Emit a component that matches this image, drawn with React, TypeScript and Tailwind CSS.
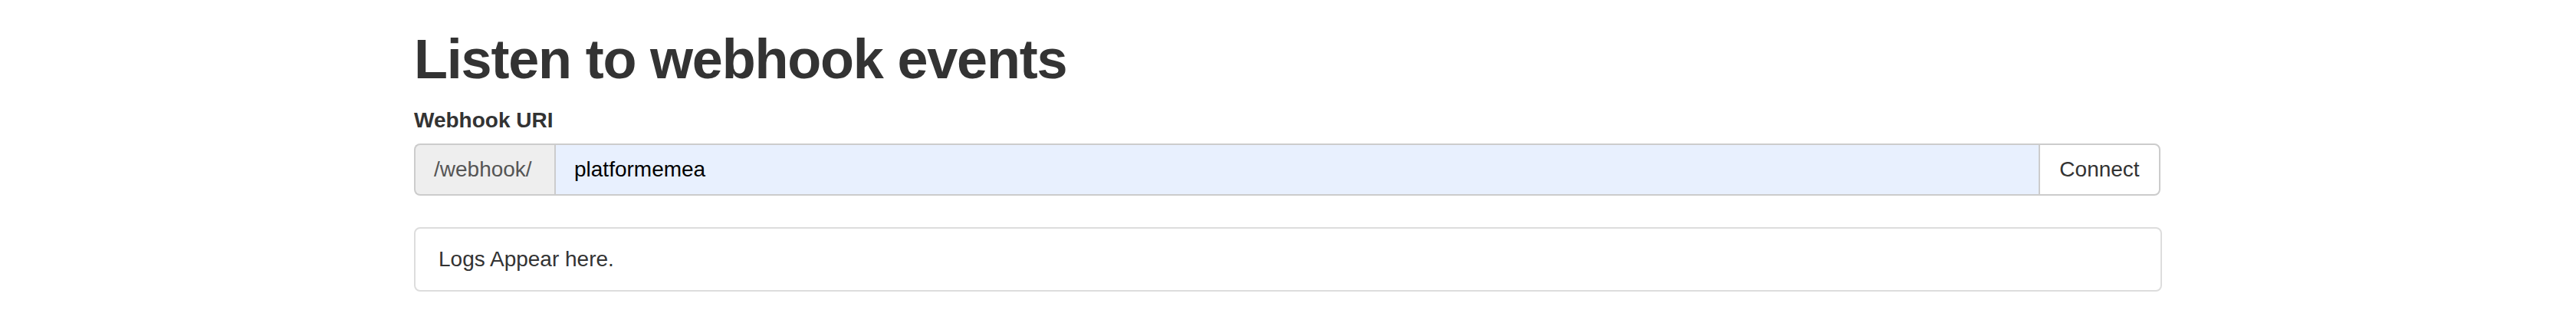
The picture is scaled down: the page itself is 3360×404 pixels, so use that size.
import React, { useState } from 'react';

export default function App() {
  const [uri, setUri] = useState('platformemea');

  return (
    <div className="min-h-screen bg-white font-['Liberation_Sans',Arial,sans-serif] text-[28px] leading-[40px] text-[#333]">
      <div className="w-[2280px] mx-auto pt-[38px]">
        <h1 className="text-[72px] leading-[79px] font-bold tracking-[-1.2px] text-[#333]">
          Listen to webhook events
        </h1>

        {/* Webhook URI input group */}
        <label className="block mt-[20px] mb-[10px] font-bold">Webhook URI</label>
        <div className="flex h-[68px] w-[2278px]">
          <span className="flex items-center w-[183px] shrink-0 px-[24px] bg-[#eee] border-2 border-r-0 border-[#ccc] rounded-l-[8px] text-[#555]">
            /webhook/
          </span>
          <input
            value={uri}
            onChange={(e) => setUri(e.target.value)}
            className="flex-1 min-w-0 h-full px-[24px] bg-[#e8f0fe] border-2 border-[#ccc] text-black outline-none"
          />
          <button className="-ml-[2px] w-[159px] shrink-0 flex items-center justify-center bg-white border-2 border-[#ccc] rounded-r-[8px] text-[#333]">
            Connect
          </button>
        </div>

        {/* Logs */}
        <div className="mt-[41px] px-[30px] py-[20px] border-2 border-[#ddd] rounded-[8px]">
          Logs Appear here.
        </div>
      </div>
    </div>
  );
}
